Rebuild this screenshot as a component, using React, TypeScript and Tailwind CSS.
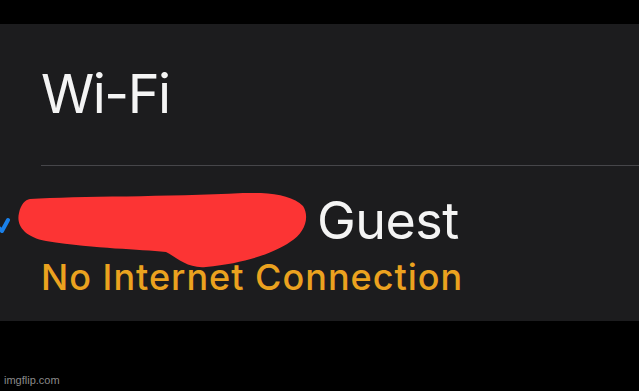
export default function App() {
  return (
    <div className="w-[639px] h-[391px] bg-black flex flex-col font-['Inter','Liberation_Sans',sans-serif] overflow-hidden">
      <div className="h-[24px] shrink-0" />
      <div className="relative h-[297px] shrink-0 bg-[#1c1c1e] pl-[41px]">
        <div className="mt-[43px] text-[54px] leading-[54px] text-[#f4f4f4] tracking-[-1.5px]">Wi-Fi</div>
        <div className="mt-[44px] h-px bg-[#46464a]" />
        <div className="mt-[29px] flex items-center text-[52px] leading-[52px] text-[#f4f4f4] tracking-[-0.5px]">
          <span className="w-[276px] shrink-0" />
          <span>Guest</span>
        </div>
        <div className="mt-[12px] text-[36px] leading-[36px] font-medium text-[#eba21f] tracking-[1px]">No Internet Connection</div>

        {/* checkmark, cut off at the edge */}
        <svg className="absolute left-0 top-[193px]" width="14" height="18" viewBox="0 0 14 18">
          <path d="M-6 6 L2 14 L8 3" fill="none" stroke="#1a80ea" strokeWidth="4" strokeLinecap="round" strokeLinejoin="round" />
        </svg>

        {/* scribble over the network name */}
        <svg className="absolute left-[18px] top-[169px]" width="290" height="76" viewBox="0 0 290 76">
          <path
            d="M12 6 C60 3 150 4 225 0 C252 -1 274 2 285 13 C292 24 287 40 272 49 C256 60 228 70 188 74 C170 76 158 64 148 59 C120 56 80 56 28 48 C6 44 -2 32 1 20 C3 11 7 7 12 6 Z"
            fill="#fc3434"
          />
        </svg>
      </div>
      <div className="flex-1 flex items-end pl-[4px] pb-[4px]">
        <span className="text-[11px] leading-[13px] text-[#8a8a8a] font-['Liberation_Sans',sans-serif]">imgflip.com</span>
      </div>
    </div>
  );
}
